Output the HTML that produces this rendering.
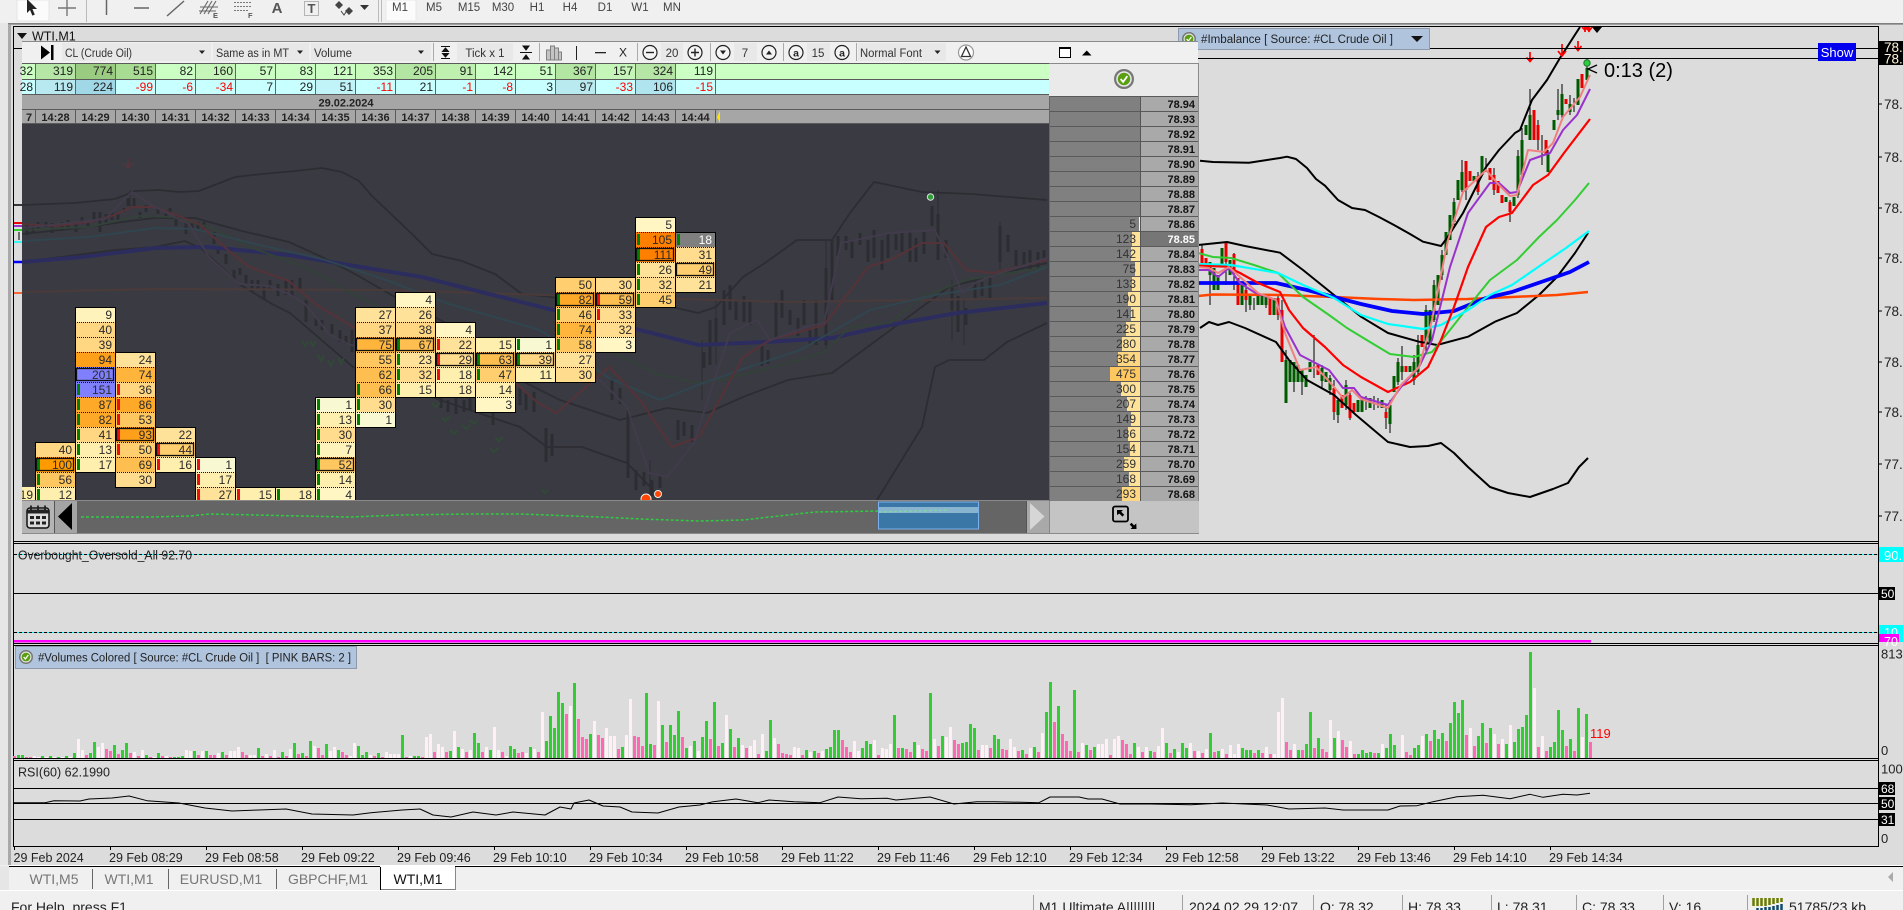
<!DOCTYPE html>
<html><head><meta charset="utf-8"><title>WTI,M1</title>
<style>
html,body{margin:0;padding:0;background:#dcdcdc;width:1903px;height:910px;overflow:hidden}
svg{display:block;font-family:"Liberation Sans",sans-serif}
.c{width:40px;height:15px}
.g,.r{x:2px;width:3px;height:11px}
.g{fill:#008000}.r{fill:#e81010}
.b{x:1.5px;width:37px;height:12px;fill:none;stroke:#111;stroke-width:1.3}
.cells text{font-size:12px;text-anchor:end;fill:#2a2a2a}
.tm{font-size:11px;font-weight:bold;text-anchor:middle;fill:#222}
.pr{font-size:11px;font-weight:bold;text-anchor:end;fill:#111}
.pv{font-size:12px;text-anchor:end;fill:#333}
.t1{font-size:12px;text-anchor:end;fill:#222}
.neg{fill:#f00}
.ax{font-size:12.5px;fill:#222}
.ay{font-size:13.5px;fill:#222}
.lb{font-size:12.5px;fill:#222}
.tf{font-size:11.5px;fill:#444;text-anchor:middle}
.tb{font-size:11.5px;fill:#333}
.tab{font-size:14px;fill:#777;text-anchor:middle}
.st{font-size:14px;fill:#222}
.k{fill:none;stroke:#000;stroke-linejoin:round}
.m{fill:none;stroke-linejoin:round}
</style></head><body>
<svg width="1903" height="910" viewBox="0 0 1903 910" xmlns="http://www.w3.org/2000/svg">
<defs>
<clipPath id="ch"><rect x="1198" y="27" width="680" height="514"/></clipPath>
<clipPath id="dk"><rect x="22" y="124" width="1027" height="376"/></clipPath>
<clipPath id="rt"><rect x="1879" y="0" width="24" height="910"/></clipPath>
<symbol id="ok" viewBox="0 0 18 18"><circle cx="9" cy="9" r="8" fill="#e8e8e8" stroke="#777" stroke-width="2"/><circle cx="9" cy="9" r="5.6" fill="#5a9e12"/><path d="M6 9l2.2 2.6L12 6.4" fill="none" stroke="#fff" stroke-width="1.6"/></symbol>
</defs>

<!-- base -->
<rect width="1903" height="910" fill="#dcdcdc"/>
<rect width="1903" height="23" fill="#f0f0f0"/>
<rect x="0" y="23" width="9" height="843" fill="#e6e6e6"/>
<rect x="8" y="23" width="3" height="843" fill="#a9a9a9"/>
<rect x="8" y="23" width="1895" height="1" fill="#808080"/>
<rect x="8" y="24" width="1895" height="1" fill="#a0a0a0"/>
<rect x="13" y="26" width="1865" height="1" fill="#000"/>
<rect x="13" y="26" width="1" height="820" fill="#000"/>
<rect x="1878" y="26" width="1" height="820" fill="#000"/>

<!-- top toolbar -->
<rect x="17" y="0" width="32" height="21" fill="#fbfbfb" stroke="#e4e4e4"/>
<path d="M27 -1V13l3-3 2.4 5.6 2.4-1L32.4 9H37z" fill="#222"/>
<path d="M67 0v16M58 8h18" stroke="#777" stroke-width="1.4" fill="none"/>
<rect x="86" y="0" width="1" height="22" fill="#bbb"/>
<path d="M106.500 0v15" stroke="#666" stroke-width="1.5"/>
<path d="M134 8h15" stroke="#666" stroke-width="1.5"/>
<path d="M167 16L184 1" stroke="#666" stroke-width="1.5"/>
<path d="M200 14L208 1M204 14L212 1M208 14L216 1M200 7H218M199 11H216" stroke="#666" stroke-width="1.1" fill="none"/>
<text x="213" y="18" font-size="7.500" font-weight="bold" fill="#555">E</text>
<path d="M234 2.500h18M234 6.500h18M234 10.500h14" stroke="#777" stroke-dasharray="2 1" fill="none"/>
<text x="248" y="18" font-size="7.500" font-weight="bold" fill="#555">F</text>
<text x="277" y="13" font-size="15" font-weight="bold" fill="#555" text-anchor="middle">A</text>
<rect x="304.500" y="1.500" width="14" height="14" fill="none" stroke="#777" stroke-dasharray="1 1"/>
<text x="311.500" y="13" font-size="13" font-weight="bold" fill="#555" text-anchor="middle">T</text>
<path d="M339 1l4 4-4 4-4-4zM349 7l4 4-4 4-4-4z" fill="#444"/><path d="M341 11l3 4 2-3" stroke="#444" fill="none"/>
<path d="M360 5h9l-4.500 5z" fill="#333"/>
<rect x="378" y="0" width="1" height="22" fill="#bbb"/><rect x="381" y="0" width="1" height="22" fill="#bbb"/>
<rect x="386" y="0" width="30" height="21" fill="#fbfbfb" stroke="#e8e8e8"/>
<g class="tfg">
<text class="tf" x="400" y="11">M1</text><text class="tf" x="434" y="11">M5</text><text class="tf" x="469" y="11">M15</text><text class="tf" x="503" y="11">M30</text><text class="tf" x="537" y="11">H1</text><text class="tf" x="570" y="11">H4</text><text class="tf" x="605" y="11">D1</text><text class="tf" x="640" y="11">W1</text><text class="tf" x="672" y="11">MN</text>
</g>

<!-- window title -->
<path d="M17 33h10l-5 6z" fill="#111"/>
<text x="32" y="40.500" font-size="12.500" fill="#111">WTI,M1</text>
<rect x="14" y="48" width="8" height="1" fill="#000"/>

<!-- right chart -->
<g clip-path="url(#ch)">
<path d="M1202 244V268M1210 262V305M1226 243V285M1234 253V290M1246 285V312M1250 296V310M1254 298V310M1266 295V308M1278 295V320M1282 300V362M1286 350V403M1294 362V392M1302 370V395M1314 335V378M1322 365V388M1330 375V395M1334 380V420M1338 398V423M1346 380V410M1350 392V420M1366 396V410M1374 396V410M1378 398V408M1386 405V429M1390 400V433M1398 358V385M1402 346V380M1414 355V385M1418 335V375M1426 305V352M1434 280V322M1442 250V280M1454 198V225M1462 160V192M1482 156V175M1486 158V172M1494 168V195M1510 200V222M1518 150V198M1522 128V178M1530 89V140M1538 120V150M1542 135V165M1548 150V172M1558 89V120M1562 84V118M1570 95V115M1574 98V112M1587 58V80M1466 161V200M1478 172V195" stroke="#000" fill="none"/>
<path stroke="#005a00" stroke-width="3" fill="none" d="M1210 262V275M1214 268V290M1218 275V290M1222 248V265M1230 260V275M1242 285V305M1250 296V305M1258 295V305M1262 296V305M1266 296V305M1274 298V315M1286 360V403M1290 360V382M1294 362V382M1298 365V382M1302 370V382M1306 375V387M1310 362V372M1322 368V381M1326 372V382M1330 378V390M1338 400V415M1346 385V405M1358 400V412M1362 400V412M1370 398V408M1382 400V408M1390 405V424M1394 376V392M1398 362V382M1402 366V372M1410 366V372M1414 362V380M1418 345V372M1426 310V345M1430 310V345M1434 285V320M1438 275V305M1442 255V275M1446 232V255M1450 215V240M1454 202V222M1458 180V200M1462 172V190M1474 176V181M1482 156V175M1506 197V202M1514 197V206M1518 156V195M1522 140V175M1526 125V135M1530 115V140M1548 153V172M1554 120V130M1558 110V115M1562 94V115M1570 104V112M1578 79V105M1587 68V80"/>
<path stroke="#e80000" stroke-width="3" fill="none" d="M1202 249V263M1206 258V266M1226 243V262M1234 254V270M1238 278V305M1246 290V300M1270 298V315M1278 298V315M1282 310V362M1318 364V375M1334 388V412M1342 395V408M1350 395V418M1354 403V412M1386 412V418M1406 366V372M1422 335V347M1466 161V190M1470 171V181M1478 176V192M1490 168V180M1494 175V190M1498 181V193M1502 195V203M1510 202V212M1534 110V140M1538 125V140M1546 140V155M1566 99V104M1582 74V88"/>
<path class="k" stroke-width="2" d="M1200 160.700L1213 162L1249 162.700L1280 158L1287 156.700L1296 159L1307 168L1316 179L1325 185.700L1338 200L1352 208L1365 210L1379 217L1394 225L1410 234L1423 241.700L1441 246L1448 236.700L1463 213L1486 167L1499 150L1515 133L1520 130L1532 100L1547 80L1560 58L1580 27"/>
<path class="k" stroke-width="2" d="M1198 245L1227 242L1245 246L1280 252.700L1303 270L1334 295L1361 316.700L1388 333L1419 341.700L1437 345L1468 336.700L1495 321.700L1517 313L1539 295L1557 277L1575 253L1588 233"/>
<path class="k" stroke-width="2" d="M1200 328L1209 322L1218 325L1229 322L1245 328L1276 342L1289 360L1307 380L1334 395L1356 415L1388 442L1410 447L1428 446L1441 443L1454 453L1468 467L1490 487L1508 493L1530 497L1553 489L1568 483L1579 467L1588 458"/>
<path class="m" stroke="#ff4500" stroke-width="2.500" d="M1198 296L1213 294.500L1280 295L1334 297L1379 299L1414 300L1468 299L1512 297L1557 295L1588 292"/>
<path class="m" stroke="#00f" stroke-width="3.800" d="M1198 283L1276 283L1307 290L1334 297L1361 304L1392 311L1423 314L1454 311L1486 298L1512 292L1544 281L1570 272L1589 262"/>
<path class="m" stroke="#32cd32" stroke-width="2" d="M1198 253L1213 257L1231 258L1254 265L1278 273L1303 297L1329 315L1347 328L1370 342L1390 354L1414 357L1432 352L1450 330L1468 307L1490 280L1517 260L1539 237L1557 220L1575 200L1589 183"/>
<path class="m" stroke="#0ff" stroke-width="2.200" d="M1198 264L1231 265L1278 273L1303 285L1334 298L1361 315L1388 324L1423 329L1441 325L1468 310L1490 295L1512 285L1544 263L1566 248L1589 231"/>
<path class="m" stroke="#f00" stroke-width="2.200" d="M1198 265.700L1227 266.700L1240 273L1258 283L1280 292L1289 310L1303 328L1325 347L1343 365L1361 377L1388 392L1410 382L1428 367L1441 340L1454 307L1468 267L1486 227L1499 217L1512 213L1533 185L1548 175L1564 153L1590 119"/>
<path class="m" stroke="#9932cc" stroke-width="2" d="M1198 270L1209 270L1218 277L1229 268L1240 283L1254 292L1276 300L1285 327L1300 355L1329 370L1343 388L1354 388L1361 397L1388 405L1401 387L1419 367L1432 340L1450 267L1468 213L1490 183L1499 183L1510 193L1517 192L1530 160L1544 155L1550 153L1563 130L1577 115L1590 89"/>
<path class="m" stroke="#f08080" stroke-width="2" d="M1198 267L1209 268L1218 273L1229 267L1240 277L1258 293L1276 300L1285 333L1300 370L1316 367L1334 387L1343 398L1352 390L1361 399L1388 408L1401 385L1419 367L1432 320L1448 240L1463 192L1486 170L1499 185L1510 196L1517 195L1528 150L1544 152L1553 143L1563 117L1580 97L1590 75"/>
<!-- arrows -->
<path d="M1530 52v9M1526.500 57.500l3.500 4 3.500-4M1562 44v11M1558 51l4 5 4-5M1578 41v9M1574.500 46l3.500 4.500 3.500-4.500" stroke="#f00" stroke-width="1.700" fill="none"/>
<path d="M1592 27h10l-5 6z" fill="#000"/>
<path d="M1582 27l3 3 3-3M1586 27l3 4 3-4M1585 27v5M1589 27v5" stroke="#f00" stroke-width="1.800" fill="none"/>
</g>
<rect x="1198" y="48" width="680" height="1" fill="#000"/>
<rect x="1198" y="58" width="680" height="1" fill="#000"/>
<circle cx="1587" cy="63" r="3.200" fill="#2ecc40" stroke="#1c7a24"/>
<path d="M1597 65l-9 4 9 4" stroke="#000" stroke-width="1.300" fill="none"/>
<text x="1604" y="77" font-size="20" fill="#000">0:13 (2)</text>
<rect x="1818" y="43" width="38" height="18" fill="#0000ee"/>
<text x="1837" y="57" font-size="13" fill="#fff" text-anchor="middle">Show</text>

<!-- imbalance label -->
<rect x="1178.500" y="28.500" width="251" height="21" fill="#b0c4de" stroke="#8f99ab"/>
<use href="#ok" x="1182" y="32" width="14" height="14"/>
<text x="1201" y="43" font-size="11.500" fill="#222" textLength="192" lengthAdjust="spacingAndGlyphs">#Imbalance [ Source: #CL Crude Oil ]</text>
<path d="M1411 36h12l-6 6z" fill="#111"/>

<!-- left stubs -->
<path d="M14 223h8" stroke="#e00" stroke-width="2"/><path d="M14 226h8" stroke="#9932cc" stroke-width="2"/><path d="M14 230h8" stroke="#32cd32" stroke-width="2"/><path d="M14 242h8" stroke="#0ff" stroke-width="1.500"/><path d="M14 262h8" stroke="#00f" stroke-width="2.500"/><path d="M14 293h8" stroke="#ff4500" stroke-width="1.500"/><path d="M14 205h8" stroke="#000" stroke-width="1.500"/>
<path d="M19 232v8" stroke="#000"/>

<!-- panel -->
<rect x="22" y="63" width="1176" height="438" fill="#a6a6a6"/>
<rect x="22" y="124" width="1027" height="376" fill="#3a3b42"/>
<g clip-path="url(#dk)">
<path fill="none" stroke="#2c2d33" stroke-width="3" d="M27 225V235M33 225V232M38 222V230M46 222V227M52 223V233M62 222V231M68 220V228M76 222V232M82 217V224M88 220V227M94 212V222M100 212V232M106 214V224M112 212V220M118 212V222M124 208V212M128 198V206M134 198V206M140 212V218M146 205V212M158 209V214M166 210V218M170 208V214M176 216V226M186 222V234M192 223V228M198 222V230M204 222V230M214 232V244M218 249V254M226 254V264M234 270V280M240 268V275M246 275V285M252 280V292M258 280V290M264 285V300M270 280V290M278 284V296M286 280V295M292 280V296M300 278V290M306 300V322M316 318V326M322 320V330M332 324V334M340 330V342M346 336V344M352 330V352M360 340V350M441 397V408M448 400V412M456 398V414M464 400V412M470 398V410M493 412V425M520 388V405M526 392V410M534 392V412M546 428V462M552 434V456M612 378V400M620 388V404M628 410V478M636 470V490M644 472V486M652 480V496M660 475V488M678 420V440M684 422V436M692 425V442M704 352V368M710 320V365M716 318V342M724 290V325M730 285V310M736 300V320M744 296V322M750 300V325M762 345V366M768 350V364M776 302V340M782 290V318M790 310V325M798 318V336M804 300V325M810 330V344M816 300V345M826 268V345M832 240V300M838 236V256M846 236V250M852 240V258M860 233V245M868 240V262M874 230V258M882 240V270M888 233V258M896 234V250M902 232V252M910 232V262M916 238V262M924 232V254M932 206V226M938 214V260M946 240V258M952 288V310M958 296V332M966 308V325M975 280V298M982 282V296M990 278V298M1000 226V262M1008 235V252M1016 250V266M1024 252V266M1030 250V270M1038 252V268M1044 250V262"/>
<path fill="none" stroke="#2c2d33" d="M130 190V206M650 460V500M716 300V365M938 190V260M702 340V400M826 240V350M1000 222V270M952 280V340M964 300V345"/>
<path class="m" stroke="#2c2d32" stroke-width="1.800" d="M22 205L75 203L115 199L135 191L159 190L179 192L199 191L235 177L262 174L295 171L322 168L342 172L359 181L372 196L412 234L432 254L462 261L495 274L522 294L600 302L672 307L698 313L716 307L743 277L765 263L797 240L832 240L850 213L874 182L922 192L971 194L1047 200"/>
<path class="m" stroke="#2c2d32" stroke-width="1.800" d="M22 234L89 227L122 222L155 218L195 218L242 231L289 242L322 257L355 274L395 297L460 330L520 380L560 400L620 420L667 408L707 413L743 397L788 380L832 373L877 340L949 287L1002 273L1047 263"/>
<path class="m" stroke="#2c2d32" stroke-width="1.800" d="M22 262L115 250L155 247L185 241L202 249L239 284L272 304L290 313L353 367L440 400L520 427L547 447L582 447L627 463L658 495M877 500L922 427L935 367L949 360L984 360L1007 342L1047 323"/>
<path class="m" stroke="#4a3a3a" stroke-width="2" d="M22 292L155 289L389 290L542 295L790 302L1047 298"/>
<path class="m" stroke="#2c2d5e" stroke-width="4" d="M22 262L82 257L155 248L209 247L289 255L355 266L422 277L489 294L565 313L632 328L699 345L765 342L832 338L890 325L957 313L1047 303"/>
<path class="m" stroke="#334238" stroke-width="1.800" d="M22 230L89 227L139 216L172 217L209 227L255 249L305 267L372 304L450 340L540 360L609 350L654 373L698 383L721 380L761 370L788 363L824 352L850 327L890 323L922 297L966 280L1047 267"/>
<path class="m" stroke="#2f4650" stroke-width="1.800" d="M22 241L89 237L155 228L195 229L255 244L322 259L389 281L449 304L540 330L609 378L660 400L698 385L740 370L800 350L870 310L935 295L1000 285L1047 267"/>
<path class="m" stroke="#553238" stroke-width="2" d="M22 224L55 226L89 222L112 216L132 207L155 207L199 224L229 251L249 267L289 281L315 304L355 328L400 345L440 355L470 340L520 387L538 403L556 413L609 367L640 400L672 447L699 437L721 397L743 357L770 340L824 325L868 267L890 260L922 243L944 243L966 270L993 273L1047 260"/>
<path class="m" stroke="#423b4c" stroke-width="1.800" d="M22 228L105 219L132 192L155 207L189 224L209 257L239 284L269 286L289 294L305 304L330 335L350 345L600 380L627 407L649 473L667 477L694 443L712 387L730 333L757 320L770 340L806 327L824 323L841 243L890 233L935 230L949 260L962 293L975 283L989 277L1047 258"/>
<!-- dim arrows -->
<path d="M128 158v10M123 163l5 5 5-5" stroke="#55343a" stroke-width="1.500" fill="none"/>
<path d="M302 341l3 5 3-5M310 341l3 5 3-5M318 355l3 6 3-6M328 360l3 6 3-6M338 358l3 6 3-6" stroke="#2f4a35" stroke-width="1.500" fill="none"/>
<path d="M432 403l4 4 4-4M441 417l4 4 4-4M450 430l4 4 4-4M462 425l4 4 4-4M470 420l4 4 4-4M495 437l4 4 4-4M490 448l4 4 4-4M542 490l3 3 3-3" stroke="#2f4a35" stroke-width="1.800" fill="none"/>
<circle cx="930.500" cy="197" r="3.200" fill="#2e9e3a" stroke="#ddd"/>

<!-- footprint cells -->
<g class="cells">
<g><rect x="22" y="487" width="13" height="15" fill="#ffefae"/><text x="33" y="499">19</text></g>

<g transform="translate(35,0)">
<rect class="c" y="442" fill="#ffd682"/><text x="37" y="454">40</text>
<rect class="c" y="457" fill="#ff9a00"/><rect class="g" y="459"/><rect class="b" y="458.500"/><text x="37" y="469">100</text>
<rect class="c" y="472" fill="#ffc760"/><rect class="g" y="474"/><text x="37" y="484">56</text>
<rect class="c" y="487" fill="#ffefae"/><rect class="g" y="489"/><text x="37" y="499">12</text>
<path d="M0 457.500h40M0 472.500h40M0 487.500h40" stroke="#111" stroke-dasharray="1 1"/><rect x=".5" y="442.500" width="40" height="60" fill="none" stroke="#000"/>
</g>

<g transform="translate(75,0)">
<rect class="c" y="307" fill="#fff3bc"/><text x="37" y="319">9</text>
<rect class="c" y="322" fill="#ffd682"/><text x="37" y="334">40</text>
<rect class="c" y="337" fill="#ffd682"/><text x="37" y="349">39</text>
<rect class="c" y="352" fill="#ffa01a"/><text x="37" y="364">94</text>
<rect class="c" y="367" fill="#8080ff"/><rect class="b" y="368.500"/><text x="37" y="379">201</text>
<rect class="c" y="382" fill="#8080ff"/><rect class="g" y="384"/><text x="37" y="394">151</text>
<rect class="c" y="397" fill="#ffa928"/><rect class="g" y="399"/><text x="37" y="409">87</text>
<rect class="c" y="412" fill="#ffa928"/><rect class="g" y="414"/><text x="37" y="424">82</text>
<rect class="c" y="427" fill="#ffd682"/><rect class="g" y="429"/><text x="37" y="439">41</text>
<rect class="c" y="442" fill="#ffefae"/><rect class="g" y="444"/><text x="37" y="454">13</text>
<rect class="c" y="457" fill="#ffefae"/><rect class="g" y="459"/><text x="37" y="469">17</text>
<path d="M0 322.500h40M0 337.500h40M0 352.500h40M0 367.500h40M0 382.500h40M0 397.500h40M0 412.500h40M0 427.500h40M0 442.500h40M0 457.500h40" stroke="#111" stroke-dasharray="1 1"/><rect x=".5" y="307.500" width="40" height="165" fill="none" stroke="#000"/>
</g>

<g transform="translate(115,0)">
<rect class="c" y="352" fill="#ffe29a"/><text x="37" y="364">24</text>
<rect class="c" y="367" fill="#ffb43c"/><text x="37" y="379">74</text>
<rect class="c" y="382" fill="#ffd682"/><rect class="r" y="384"/><text x="37" y="394">36</text>
<rect class="c" y="397" fill="#ffa928"/><rect class="r" y="399"/><text x="37" y="409">86</text>
<rect class="c" y="412" fill="#ffc760"/><rect class="r" y="414"/><text x="37" y="424">53</text>
<rect class="c" y="427" fill="#ffa01a"/><rect class="r" y="429"/><rect class="b" y="428.500"/><text x="37" y="439">93</text>
<rect class="c" y="442" fill="#ffce6e"/><rect class="r" y="444"/><text x="37" y="454">50</text>
<rect class="c" y="457" fill="#ffbf50"/><text x="37" y="469">69</text>
<rect class="c" y="472" fill="#ffdc8e"/><text x="37" y="484">30</text>
<path d="M0 367.500h40M0 382.500h40M0 397.500h40M0 412.500h40M0 427.500h40M0 442.500h40M0 457.500h40M0 472.500h40" stroke="#111" stroke-dasharray="1 1"/><rect x=".5" y="352.500" width="40" height="135" fill="none" stroke="#000"/>
</g>

<g transform="translate(155,0)">
<rect class="c" y="427" fill="#ffe29a"/><text x="37" y="439">22</text>
<rect class="c" y="442" fill="#ffce6e"/><rect class="r" y="444"/><rect class="b" y="443.500"/><text x="37" y="454">44</text>
<rect class="c" y="457" fill="#ffefae"/><rect class="r" y="459"/><text x="37" y="469">16</text>
<path d="M0 442.500h40M0 457.500h40" stroke="#111" stroke-dasharray="1 1"/><rect x=".5" y="427.500" width="40" height="45" fill="none" stroke="#000"/>
</g>

<g transform="translate(195,0)">
<rect class="c" y="457" fill="#f8f8d2"/><rect class="r" y="459"/><text x="37" y="469">1</text>
<rect class="c" y="472" fill="#ffefae"/><rect class="r" y="474"/><text x="37" y="484">17</text>
<rect class="c" y="487" fill="#ffe29a"/><rect class="r" y="489"/><text x="37" y="499">27</text>
<path d="M0 472.500h40M0 487.500h40" stroke="#111" stroke-dasharray="1 1"/><rect x=".5" y="457.500" width="40" height="45" fill="none" stroke="#000"/>
</g>

<g transform="translate(235,0)"><rect class="c" y="487" fill="#ffefae"/><rect class="r" y="489"/><text x="37" y="499">15</text><rect x=".5" y="487.500" width="40" height="15" fill="none" stroke="#000"/></g>
<g transform="translate(275,0)"><rect class="c" y="487" fill="#ffefae"/><rect class="g" y="489"/><text x="37" y="499">18</text><rect x=".5" y="487.500" width="40" height="15" fill="none" stroke="#000"/></g>

<g transform="translate(315,0)">
<rect class="c" y="397" fill="#f8f8d2"/><rect class="g" y="399"/><text x="37" y="409">1</text>
<rect class="c" y="412" fill="#ffefae"/><rect class="g" y="414"/><text x="37" y="424">13</text>
<rect class="c" y="427" fill="#ffdc8e"/><rect class="g" y="429"/><text x="37" y="439">30</text>
<rect class="c" y="442" fill="#fff3bc"/><rect class="g" y="444"/><text x="37" y="454">7</text>
<rect class="c" y="457" fill="#ffc760"/><rect class="g" y="459"/><rect class="b" y="458.500"/><text x="37" y="469">52</text>
<rect class="c" y="472" fill="#ffefae"/><rect class="g" y="474"/><text x="37" y="484">14</text>
<rect class="c" y="487" fill="#fff6c4"/><rect class="g" y="489"/><text x="37" y="499">4</text>
<path d="M0 412.500h40M0 427.500h40M0 442.500h40M0 457.500h40M0 472.500h40M0 487.500h40" stroke="#111" stroke-dasharray="1 1"/><rect x=".5" y="397.500" width="40" height="105" fill="none" stroke="#000"/>
</g>

<g transform="translate(355,0)">
<rect class="c" y="307" fill="#ffe29a"/><text x="37" y="319">27</text>
<rect class="c" y="322" fill="#ffd682"/><text x="37" y="334">37</text>
<rect class="c" y="337" fill="#ffb43c"/><rect class="b" y="338.500"/><text x="37" y="349">75</text>
<rect class="c" y="352" fill="#ffc760"/><text x="37" y="364">55</text>
<rect class="c" y="367" fill="#ffbf50"/><text x="37" y="379">62</text>
<rect class="c" y="382" fill="#ffbf50"/><rect class="g" y="384"/><text x="37" y="394">66</text>
<rect class="c" y="397" fill="#ffdc8e"/><rect class="g" y="399"/><text x="37" y="409">30</text>
<rect class="c" y="412" fill="#f8f8d2"/><rect class="g" y="414"/><text x="37" y="424">1</text>
<path d="M0 322.500h40M0 337.500h40M0 352.500h40M0 367.500h40M0 382.500h40M0 397.500h40M0 412.500h40" stroke="#111" stroke-dasharray="1 1"/><rect x=".5" y="307.500" width="40" height="120" fill="none" stroke="#000"/>
</g>

<g transform="translate(395,0)">
<rect class="c" y="292" fill="#fff6c4"/><text x="37" y="304">4</text>
<rect class="c" y="307" fill="#ffe29a"/><text x="37" y="319">26</text>
<rect class="c" y="322" fill="#ffd682"/><text x="37" y="334">38</text>
<rect class="c" y="337" fill="#ffbf50"/><rect class="g" y="339"/><rect class="b" y="338.500"/><text x="37" y="349">67</text>
<rect class="c" y="352" fill="#ffe29a"/><rect class="g" y="354"/><text x="37" y="364">23</text>
<rect class="c" y="367" fill="#ffdc8e"/><rect class="g" y="369"/><text x="37" y="379">32</text>
<rect class="c" y="382" fill="#ffefae"/><rect class="g" y="384"/><text x="37" y="394">15</text>
<path d="M0 307.500h40M0 322.500h40M0 337.500h40M0 352.500h40M0 367.500h40M0 382.500h40" stroke="#111" stroke-dasharray="1 1"/><rect x=".5" y="292.500" width="40" height="105" fill="none" stroke="#000"/>
</g>

<g transform="translate(435,0)">
<rect class="c" y="322" fill="#fff6c4"/><text x="37" y="334">4</text>
<rect class="c" y="337" fill="#ffe29a"/><rect class="r" y="339"/><text x="37" y="349">22</text>
<rect class="c" y="352" fill="#ffdc8e"/><rect class="r" y="354"/><rect class="b" y="353.500"/><text x="37" y="364">29</text>
<rect class="c" y="367" fill="#ffefae"/><rect class="r" y="369"/><text x="37" y="379">18</text>
<rect class="c" y="382" fill="#ffefae"/><text x="37" y="394">18</text>
<path d="M0 337.500h40M0 352.500h40M0 367.500h40M0 382.500h40" stroke="#111" stroke-dasharray="1 1"/><rect x=".5" y="322.500" width="40" height="75" fill="none" stroke="#000"/>
</g>

<g transform="translate(475,0)">
<rect class="c" y="337" fill="#ffefae"/><text x="37" y="349">15</text>
<rect class="c" y="352" fill="#ffbf50"/><rect class="g" y="354"/><rect class="b" y="353.500"/><text x="37" y="364">63</text>
<rect class="c" y="367" fill="#ffce6e"/><rect class="g" y="369"/><text x="37" y="379">47</text>
<rect class="c" y="382" fill="#ffefae"/><text x="37" y="394">14</text>
<rect class="c" y="397" fill="#fff6c4"/><text x="37" y="409">3</text>
<path d="M0 352.500h40M0 367.500h40M0 382.500h40M0 397.500h40" stroke="#111" stroke-dasharray="1 1"/><rect x=".5" y="337.500" width="40" height="75" fill="none" stroke="#000"/>
</g>

<g transform="translate(515,0)">
<rect class="c" y="337" fill="#f8f8d2"/><rect class="g" y="339"/><text x="37" y="349">1</text>
<rect class="c" y="352" fill="#ffd682"/><rect class="g" y="354"/><rect class="b" y="353.500"/><text x="37" y="364">39</text>
<rect class="c" y="367" fill="#ffefae"/><text x="37" y="379">11</text>
<path d="M0 352.500h40M0 367.500h40" stroke="#111" stroke-dasharray="1 1"/><rect x=".5" y="337.500" width="40" height="45" fill="none" stroke="#000"/>
</g>

<g transform="translate(555,0)">
<rect class="c" y="277" fill="#ffce6e"/><text x="37" y="289">50</text>
<rect class="c" y="292" fill="#ffa928"/><rect class="g" y="294"/><rect class="b" y="293.500"/><text x="37" y="304">82</text>
<rect class="c" y="307" fill="#ffce6e"/><rect class="g" y="309"/><text x="37" y="319">46</text>
<rect class="c" y="322" fill="#ffb43c"/><rect class="g" y="324"/><text x="37" y="334">74</text>
<rect class="c" y="337" fill="#ffc760"/><rect class="g" y="339"/><text x="37" y="349">58</text>
<rect class="c" y="352" fill="#ffe29a"/><text x="37" y="364">27</text>
<rect class="c" y="367" fill="#ffdc8e"/><text x="37" y="379">30</text>
<path d="M0 292.500h40M0 307.500h40M0 322.500h40M0 337.500h40M0 352.500h40M0 367.500h40" stroke="#111" stroke-dasharray="1 1"/><rect x=".5" y="277.500" width="40" height="105" fill="none" stroke="#000"/>
</g>

<g transform="translate(595,0)">
<rect class="c" y="277" fill="#ffdc8e"/><text x="37" y="289">30</text>
<rect class="c" y="292" fill="#ffbf50"/><rect class="r" y="294"/><rect class="b" y="293.500"/><text x="37" y="304">59</text>
<rect class="c" y="307" fill="#ffdc8e"/><rect class="r" y="309"/><text x="37" y="319">33</text>
<rect class="c" y="322" fill="#ffdc8e"/><text x="37" y="334">32</text>
<rect class="c" y="337" fill="#fff6c4"/><text x="37" y="349">3</text>
<path d="M0 292.500h40M0 307.500h40M0 322.500h40M0 337.500h40" stroke="#111" stroke-dasharray="1 1"/><rect x=".5" y="277.500" width="40" height="75" fill="none" stroke="#000"/>
</g>

<g transform="translate(635,0)">
<rect class="c" y="217" fill="#fff6c4"/><text x="37" y="229">5</text>
<rect class="c" y="232" fill="#ff8000"/><rect class="g" y="234"/><text x="37" y="244">105</text>
<rect class="c" y="247" fill="#ff8000"/><rect class="g" y="249"/><rect class="b" y="248.500"/><text x="37" y="259">111</text>
<rect class="c" y="262" fill="#ffe29a"/><rect class="g" y="264"/><text x="37" y="274">26</text>
<rect class="c" y="277" fill="#ffdc8e"/><rect class="g" y="279"/><text x="37" y="289">32</text>
<rect class="c" y="292" fill="#ffce6e"/><rect class="g" y="294"/><text x="37" y="304">45</text>
<path d="M0 232.500h40M0 247.500h40M0 262.500h40M0 277.500h40M0 292.500h40" stroke="#111" stroke-dasharray="1 1"/><rect x=".5" y="217.500" width="40" height="90" fill="none" stroke="#000"/>
</g>

<g transform="translate(675,0)">
<rect class="c" y="232" fill="#7f7f7f"/><rect class="g" y="234"/><text x="37" y="244" style="fill:#fff">18</text>
<rect class="c" y="247" fill="#ffdc8e"/><text x="37" y="259">31</text>
<rect class="c" y="262" fill="#ffce6e"/><rect class="b" y="263.500"/><text x="37" y="274">49</text>
<rect class="c" y="277" fill="#ffe29a"/><text x="37" y="289">21</text>
<path d="M0 247.500h40M0 262.500h40M0 277.500h40" stroke="#111" stroke-dasharray="1 1"/><rect x=".5" y="232.500" width="40" height="60" fill="none" stroke="#000"/>
</g>
</g>
<circle cx="646" cy="499" r="5" fill="#ff4500" stroke="#eee"/>
<circle cx="658" cy="494" r="3.500" fill="#ff4500" stroke="#eee"/>
</g>

<!-- rows 1/2 -->
<rect x="22" y="63" width="1027" height="16" fill="#ccffc4"/>
<rect x="22" y="79" width="1027" height="15" fill="#c8ffff"/>
<rect x="35" y="63" width="40" height="16" fill="#b5e6a5"/><rect x="75" y="63" width="40" height="16" fill="#99cc80"/><rect x="115" y="63" width="40" height="16" fill="#a8dc92"/><rect x="195" y="63" width="40" height="16" fill="#c5f5b8"/><rect x="355" y="63" width="40" height="16" fill="#c8fabc"/><rect x="395" y="63" width="40" height="16" fill="#b3e5a3"/><rect x="435" y="63" width="40" height="16" fill="#c0f0b0"/><rect x="555" y="63" width="40" height="16" fill="#b3e5a3"/><rect x="595" y="63" width="40" height="16" fill="#c5f5b8"/><rect x="635" y="63" width="40" height="16" fill="#b5e6a5"/>
<rect x="35" y="79" width="40" height="15" fill="#b8e8f0"/><rect x="75" y="79" width="40" height="15" fill="#a0d8e8"/><rect x="315" y="79" width="40" height="15" fill="#c0f4f8"/><rect x="555" y="79" width="40" height="15" fill="#b8eaf0"/><rect x="635" y="79" width="40" height="15" fill="#b0e4ee"/>
<path d="M35.500 63v31M75.500 63v31M115.500 63v31M155.500 63v31M195.500 63v31M235.500 63v31M275.500 63v31M315.500 63v31M355.500 63v31M395.500 63v31M435.500 63v31M475.500 63v31M515.500 63v31M555.500 63v31M595.500 63v31M635.500 63v31M675.500 63v31M715.500 63v31" stroke="#5c6a5c" fill="none"/>
<path d="M22 63.500h1027M22 79.500h1027M22 94.500h1027M22 109.500h1027M22 123.500h1027" stroke="#5a5a5a" fill="none"/>
<text class="t1" x="33" y="75">32</text><text class="t1" x="73" y="75">319</text><text class="t1" x="113" y="75">774</text><text class="t1" x="153" y="75">515</text><text class="t1" x="193" y="75">82</text><text class="t1" x="233" y="75">160</text><text class="t1" x="273" y="75">57</text><text class="t1" x="313" y="75">83</text><text class="t1" x="353" y="75">121</text><text class="t1" x="393" y="75">353</text><text class="t1" x="433" y="75">205</text><text class="t1" x="473" y="75">91</text><text class="t1" x="513" y="75">142</text><text class="t1" x="553" y="75">51</text><text class="t1" x="593" y="75">367</text><text class="t1" x="633" y="75">157</text><text class="t1" x="673" y="75">324</text><text class="t1" x="713" y="75">119</text>
<text class="t1" x="33" y="91">28</text><text class="t1" x="73" y="91">119</text><text class="t1" x="113" y="91">224</text><text class="t1 neg" x="153" y="91">-99</text><text class="t1 neg" x="193" y="91">-6</text><text class="t1 neg" x="233" y="91">-34</text><text class="t1" x="273" y="91">7</text><text class="t1" x="313" y="91">29</text><text class="t1" x="353" y="91">51</text><text class="t1 neg" x="393" y="91">-11</text><text class="t1" x="433" y="91">21</text><text class="t1 neg" x="473" y="91">-1</text><text class="t1 neg" x="513" y="91">-8</text><text class="t1" x="553" y="91">3</text><text class="t1" x="593" y="91">97</text><text class="t1 neg" x="633" y="91">-33</text><text class="t1" x="673" y="91">106</text><text class="t1 neg" x="713" y="91">-15</text>
<text class="tm" x="346" y="106.500">29.02.2024</text>
<path d="M35.500 109v15M75.500 109v15M115.500 109v15M155.500 109v15M195.500 109v15M235.500 109v15M275.500 109v15M315.500 109v15M355.500 109v15M395.500 109v15M435.500 109v15M475.500 109v15M515.500 109v15M555.500 109v15M595.500 109v15M635.500 109v15M675.500 109v15M715.500 109v15" stroke="#5a5a5a" fill="none"/>
<text class="tm" x="29" y="121">7</text><text class="tm" x="55.500" y="121">14:28</text><text class="tm" x="95.500" y="121">14:29</text><text class="tm" x="135.500" y="121">14:30</text><text class="tm" x="175.500" y="121">14:31</text><text class="tm" x="215.500" y="121">14:32</text><text class="tm" x="255.500" y="121">14:33</text><text class="tm" x="295.500" y="121">14:34</text><text class="tm" x="335.500" y="121">14:35</text><text class="tm" x="375.500" y="121">14:36</text><text class="tm" x="415.500" y="121">14:37</text><text class="tm" x="455.500" y="121">14:38</text><text class="tm" x="495.500" y="121">14:39</text><text class="tm" x="535.500" y="121">14:40</text><text class="tm" x="575.500" y="121">14:41</text><text class="tm" x="615.500" y="121">14:42</text><text class="tm" x="655.500" y="121">14:43</text><text class="tm" x="695.500" y="121">14:44</text>
<path d="M720 111l-3 6 3 6z" fill="#ffe600"/>

<!-- panel toolbar -->
<rect x="22" y="41" width="1176" height="22" fill="#f0f0f0"/>
<rect x="22" y="41" width="1176" height="1" fill="#8a8a8a"/>
<path d="M41 45.500v14l9-7z" fill="#000"/><rect x="51" y="45" width="2.500" height="15" fill="#000"/>
<rect x="62" y="43" width="149" height="18" fill="#e8e8e8"/><text class="tb" x="65" y="57" textLength="67" lengthAdjust="spacingAndGlyphs">CL (Crude Oil)</text><path d="M199 50.500h6l-3 3.500z" fill="#222"/>
<rect x="213" y="43" width="96" height="18" fill="#e8e8e8"/><text class="tb" x="216" y="57" textLength="73" lengthAdjust="spacingAndGlyphs">Same as in MT</text><path d="M297 50.500h6l-3 3.500z" fill="#222"/>
<rect x="311" y="43" width="120" height="18" fill="#e8e8e8"/><text class="tb" x="314" y="57" textLength="38" lengthAdjust="spacingAndGlyphs">Volume</text><path d="M418 50.500h6l-3 3.500z" fill="#222"/>
<rect x="433" y="43" width="1" height="18" fill="#aaa"/>
<path d="M441 46.500h9M441 58.500h9M445.500 48l-3 3.500h6zM445.500 57l-3-3.500h6z" stroke="#111" fill="#111" stroke-width="1"/>
<rect x="457" y="43" width="56" height="18" fill="#e8e8e8"/><text class="tb" x="485" y="57" text-anchor="middle">Tick x 1</text>
<path d="M520 52.500h12M526 50l-3-4h6zM526 55l-3 4h6z" stroke="#111" fill="#111" stroke-width="1"/>
<rect x="539" y="43" width="1" height="18" fill="#aaa"/>
<path d="M546.500 60V50h4v10M550.500 60V46h4v14M554.500 60V48h4v12M558.500 60V52h3v8" fill="#c4c4c4" stroke="#808080"/><rect x="546" y="59.500" width="16" height="1" fill="#808080"/>
<rect x="576" y="46" width="1" height="14" fill="#222"/>
<rect x="595" y="52" width="11" height="1.300" fill="#222"/>
<text x="623" y="56.500" font-size="12" text-anchor="middle" fill="#222">X</text>
<rect x="637" y="43" width="1" height="18" fill="#aaa"/>
<circle cx="650" cy="52.500" r="7" fill="#f4f4f4" stroke="#222" stroke-width="1.200"/><path d="M646 52.500h8" stroke="#222" stroke-width="1.400"/>
<rect x="661" y="43" width="22" height="18" fill="#e8e8e8"/><text class="tb" x="672" y="57" text-anchor="middle">20</text>
<circle cx="695" cy="52.500" r="7" fill="#f4f4f4" stroke="#222" stroke-width="1.200"/><path d="M691 52.500h8M695 48.500v8" stroke="#222" stroke-width="1.400"/>
<rect x="710" y="43" width="1" height="18" fill="#aaa"/>
<circle cx="723" cy="52.500" r="7" fill="#f4f4f4" stroke="#222" stroke-width="1.200"/><path d="M720 50.500h6l-3 4z" fill="#222"/>
<rect x="734" y="43" width="23" height="18" fill="#e8e8e8"/><text class="tb" x="745" y="57" text-anchor="middle">7</text>
<circle cx="769" cy="52.500" r="7" fill="#f4f4f4" stroke="#222" stroke-width="1.200"/><path d="M766 54.500h6l-3-4z" fill="#222"/>
<rect x="783" y="43" width="1" height="18" fill="#aaa"/>
<circle cx="796" cy="52.500" r="7" fill="#f4f4f4" stroke="#222" stroke-width="1.200"/><text x="796" y="56.500" font-size="10.500" font-weight="bold" text-anchor="middle" fill="#222">a</text>
<rect x="807" y="43" width="23" height="18" fill="#e8e8e8"/><text class="tb" x="818" y="57" text-anchor="middle">15</text>
<circle cx="842" cy="52.500" r="7" fill="#f4f4f4" stroke="#222" stroke-width="1.200"/><text x="842" y="56.500" font-size="10.500" font-weight="bold" text-anchor="middle" fill="#222">a</text>
<rect x="856" y="43" width="1" height="18" fill="#aaa"/>
<rect x="858" y="43" width="88" height="18" fill="#e8e8e8"/><text class="tb" x="860" y="57" textLength="62" lengthAdjust="spacingAndGlyphs">Normal Font</text><path d="M934.500 50.500h6l-3 3.500z" fill="#222"/>
<circle cx="966" cy="52.500" r="7.500" fill="#fff" stroke="#999" stroke-width="1.200"/><path d="M966 47l-4.500 9.500h9z" fill="none" stroke="#333" stroke-width="1.300"/>
<rect x="1059.500" y="47.500" width="11" height="10" fill="#fff" stroke="#000"/><rect x="1059" y="47" width="12" height="2" fill="#000"/>
<path d="M1082 55.500h9.500l-4.750-5z" fill="#000"/>

<!-- profile + price -->
<rect x="1049" y="63" width="149" height="33" fill="#eaeaea"/>
<rect x="1049" y="63" width="149" height="1" fill="#8a8a8a"/>
<use href="#ok" x="1114" y="69" width="20" height="20"/>
<rect x="1049" y="96" width="91" height="405" fill="#808080"/>
<rect x="1141" y="96" width="57" height="405" fill="#a9a9a9"/>
<rect x="1141" y="231" width="57" height="15" fill="#767676"/>
<g fill="#ffe29a">
<rect x="1139" y="216" width="1" height="15" fill="#fff6c4"/><rect x="1132" y="231" width="8" height="15"/><rect x="1131" y="246" width="9" height="15"/><rect x="1135" y="261" width="5" height="15"/><rect x="1132" y="276" width="8" height="15"/><rect x="1128" y="291" width="12" height="15"/><rect x="1131" y="306" width="9" height="15"/><rect x="1126" y="321" width="14" height="15"/><rect x="1122" y="336" width="18" height="15"/><rect x="1118" y="351" width="22" height="15" fill="#ffd682"/><rect x="1110" y="366" width="30" height="15" fill="#ffc760"/><rect x="1121" y="381" width="19" height="15"/><rect x="1127" y="396" width="13" height="15"/><rect x="1131" y="411" width="9" height="15"/><rect x="1128" y="426" width="12" height="15"/><rect x="1130" y="441" width="10" height="15"/><rect x="1124" y="456" width="16" height="15"/><rect x="1129" y="471" width="11" height="15"/><rect x="1122" y="486" width="18" height="15" fill="#ffd682"/>
</g>
<path d="M1049 96h149M1049 111h149M1049 126h149M1049 141h149M1049 156h149M1049 171h149M1049 186h149M1049 201h149M1049 216h149M1049 231h149M1049 246h149M1049 261h149M1049 276h149M1049 291h149M1049 306h149M1049 321h149M1049 336h149M1049 351h149M1049 366h149M1049 381h149M1049 396h149M1049 411h149M1049 426h149M1049 441h149M1049 456h149M1049 471h149M1049 486h149" stroke="#5a5a5a" stroke-width="1" transform="translate(0,.5)"/>
<rect x="1140" y="96" width="1" height="405" fill="#555"/>
<rect x="1049" y="96" width="1" height="405" fill="#666"/>
<text class="pr" x="1195" y="108">78.94</text><text class="pr" x="1195" y="123">78.93</text><text class="pr" x="1195" y="138">78.92</text><text class="pr" x="1195" y="153">78.91</text><text class="pr" x="1195" y="168">78.90</text><text class="pr" x="1195" y="183">78.89</text><text class="pr" x="1195" y="198">78.88</text><text class="pr" x="1195" y="213">78.87</text><text class="pr" x="1195" y="228">78.86</text><text class="pr" x="1195" y="243" style="fill:#fff">78.85</text><text class="pr" x="1195" y="258">78.84</text><text class="pr" x="1195" y="273">78.83</text><text class="pr" x="1195" y="288">78.82</text><text class="pr" x="1195" y="303">78.81</text><text class="pr" x="1195" y="318">78.80</text><text class="pr" x="1195" y="333">78.79</text><text class="pr" x="1195" y="348">78.78</text><text class="pr" x="1195" y="363">78.77</text><text class="pr" x="1195" y="378">78.76</text><text class="pr" x="1195" y="393">78.75</text><text class="pr" x="1195" y="408">78.74</text><text class="pr" x="1195" y="423">78.73</text><text class="pr" x="1195" y="438">78.72</text><text class="pr" x="1195" y="453">78.71</text><text class="pr" x="1195" y="468">78.70</text><text class="pr" x="1195" y="483">78.69</text><text class="pr" x="1195" y="498">78.68</text>
<text class="pv" x="1136" y="228">5</text><text class="pv" x="1136" y="243">123</text><text class="pv" x="1136" y="258">142</text><text class="pv" x="1136" y="273">75</text><text class="pv" x="1136" y="288">133</text><text class="pv" x="1136" y="303">190</text><text class="pv" x="1136" y="318">141</text><text class="pv" x="1136" y="333">225</text><text class="pv" x="1136" y="348">280</text><text class="pv" x="1136" y="363">354</text><text class="pv" x="1136" y="378">475</text><text class="pv" x="1136" y="393">300</text><text class="pv" x="1136" y="408">207</text><text class="pv" x="1136" y="423">149</text><text class="pv" x="1136" y="438">186</text><text class="pv" x="1136" y="453">154</text><text class="pv" x="1136" y="468">259</text><text class="pv" x="1136" y="483">168</text><text class="pv" x="1136" y="498">293</text>
<rect x="1198" y="63" width="1" height="471" fill="#8a8a8a"/>

<!-- scroll strip -->
<rect x="22" y="500" width="1027" height="33" fill="#656565"/>
<rect x="22" y="500" width="1027" height="1" fill="#8a8a8a"/>
<rect x="22" y="501" width="32" height="32" fill="#b4b4b4"/>
<rect x="54" y="501" width="1" height="32" fill="#555"/>
<rect x="55" y="501" width="22" height="32" fill="#a4a4a4"/>
<rect x="27" y="508" width="22" height="20" rx="3" fill="#dcdcdc" stroke="#111" stroke-width="1.500"/>
<path d="M27 512.500a3 3 0 0 1 3-3h16a3 3 0 0 1 3 3v1H27z" fill="#222"/>
<path d="M31 505.500v4M38 505.500v4M45 505.500v4" stroke="#222" stroke-width="1.800"/>
<path d="M30 516h4v3h-4zM36 516h4v3h-4zM42 516h4v3h-4zM30 521.500h4v3h-4zM36 521.500h4v3h-4zM42 521.500h4v3h-4z" fill="#222"/>
<path d="M72 503v27l-14-13.500z" fill="#000"/>
<path d="M81 517L150 517L190 516L210 514L300 516L350 517L400 515L470 514L520 514L600 517L640 519L700 521L743 520L815 512L948 510" fill="none" stroke="#2ecc40" stroke-width="1.500" stroke-dasharray="3 2"/>
<rect x="878.500" y="502" width="100" height="27" fill="#3a76a6" stroke="#7ab0ee"/>
<rect x="879" y="507" width="99" height="6" fill="#89b4d0"/>
<path d="M879 512L948 510" fill="none" stroke="#7fd8a0" stroke-width="1.300" stroke-dasharray="3 2"/>
<rect x="1027" y="501" width="22" height="32" fill="#a9a9a9"/><rect x="1026" y="501" width="1" height="32" fill="#555"/>
<path d="M1030 503v27l14.500-13.500z" fill="#d6d6d6"/>
<rect x="1049" y="501" width="150" height="32" fill="#c4c4c4"/>
<rect x="1049" y="501" width="1" height="32" fill="#888"/>
<rect x="1113" y="506.500" width="15" height="15" rx="2" fill="none" stroke="#000" stroke-width="1.800"/>
<path d="M1117 510h6l-1.800 1.800 3 3-1.800 1.800-3-3L1117 515z" fill="#000"/>
<path d="M1136.500 529h-6l1.800-1.800-2.600-2.600 1.800-1.800 2.600 2.600 2.200-2z" fill="#000"/>
<rect x="22" y="533" width="1177" height="1" fill="#8a8a8a"/>

<!-- panes -->
<path d="M13 541.500h1865M13 543.500h1865M13 643.500h1865M13 645.500h1865M13 758.500h1865M13 760.500h1865M13 846.500h1866" stroke="#000" fill="none"/>
<rect x="13" y="593" width="1865" height="1" fill="#000"/>
<path d="M14 554.500h1864M14 632.500h1864" stroke="#0ff" fill="none"/>
<path d="M14 554.500h1864M14 632.500h1864" stroke="#000" stroke-dasharray="3 2" fill="none"/>
<rect x="14" y="640" width="1577" height="2.500" fill="#f0f"/>
<text class="lb" x="18" y="559.500" textLength="174" lengthAdjust="spacingAndGlyphs">Overbought_Oversold_All 92.70</text>

<!-- volumes -->
<g transform="translate(.5,0)" fill="none" stroke-width="3" shape-rendering="crispEdges">
<path stroke="#fff0f5" d="M34 758v-2M38 758v-1M46 758v-1M54 758v-1M62 758v-1M70 758v-1M78 758v-19M82 758v-8M98 758v-11M102 758v-15M134 758v-6M142 758v-8M154 758v-1M166 758v-2M186 758v-8M190 758v-7M202 758v-7M218 758v-5M230 758v-7M234 758v-7M238 758v-11M250 758v-3M254 758v-3M266 758v-4M274 758v-8M290 758v-9M314 758v-12M330 758v-7M334 758v-11M350 758v-2M354 758v-15M370 758v-3M386 758v-6M390 758v-4M394 758v-4M398 758v-4M410 758v-2M426 758v-21M430 758v-24M438 758v-14M442 758v-11M454 758v-27M462 758v-9M470 758v-8M486 758v-11M494 758v-31M498 758v-8M506 758v-2M526 758v-5M534 758v-9M542 758v-46M570 758v-52M594 758v-37M606 758v-30M610 758v-22M614 758v-22M626 758v-23M630 758v-59M658 758v-57M690 758v-12M698 758v-7M726 758v-43M742 758v-13M750 758v-12M754 758v-18M762 758v-24M774 758v-20M794 758v-11M798 758v-10M810 758v-6M822 758v-7M854 758v-17M858 758v-7M874 758v-18M882 758v-10M886 758v-9M890 758v-14M918 758v-13M934 758v-19M946 758v-21M950 758v-31M982 758v-13M986 758v-13M1010 758v-19M1014 758v-11M1030 758v-10M1042 758v-25M1082 758v-15M1098 758v-14M1102 758v-14M1106 758v-19M1114 758v-19M1118 758v-22M1138 758v-11M1146 758v-11M1158 758v-12M1162 758v-30M1178 758v-6M1190 758v-15M1198 758v-7M1206 758v-9M1222 758v-9M1230 758v-13M1234 758v-4M1238 758v-14M1266 758v-11M1274 758v-4M1278 758v-46M1282 758v-60M1294 758v-14M1330 758v-38M1338 758v-27M1350 758v-17M1382 758v-14M1402 758v-23M1422 758v-22M1470 758v-30M1494 758v-24M1502 758v-19M1510 758v-33M1534 758v-70M1542 758v-22M1582 758v-21"/>
<path stroke="#ff69b4" d="M14 758v-2M26 758v-1M30 758v-1M86 758v-3M106 758v-9M110 758v-7M118 758v-4M130 758v-5M138 758v-2M150 758v-1M162 758v-2M170 758v-1M198 758v-3M210 758v-3M214 758v-3M226 758v-3M242 758v-6M246 758v-3M262 758v-2M270 758v-2M278 758v-1M286 758v-2M298 758v-4M306 758v-2M318 758v-10M322 758v-3M342 758v-6M346 758v-3M374 758v-2M382 758v-1M406 758v-1M422 758v-1M434 758v-6M446 758v-6M466 758v-6M482 758v-6M502 758v-6M518 758v-5M522 758v-6M538 758v-6M566 758v-44M578 758v-39M582 758v-21M586 758v-19M598 758v-23M602 758v-20M618 758v-9M634 758v-22M638 758v-21M642 758v-12M654 758v-13M666 758v-16M682 758v-21M710 758v-19M718 758v-12M734 758v-11M746 758v-10M758 758v-4M778 758v-14M782 758v-5M786 758v-4M790 758v-3M802 758v-3M818 758v-5M842 758v-18M846 758v-11M850 758v-6M878 758v-3M898 758v-10M906 758v-9M910 758v-6M922 758v-9M926 758v-7M938 758v-12M954 758v-18M958 758v-14M978 758v-8M990 758v-10M1002 758v-9M1006 758v-8M1018 758v-7M1026 758v-4M1038 758v-6M1054 758v-36M1062 758v-24M1066 758v-17M1070 758v-7M1078 758v-6M1090 758v-8M1110 758v-3M1122 758v-18M1126 758v-14M1130 758v-4M1142 758v-6M1154 758v-6M1170 758v-5M1194 758v-7M1202 758v-5M1214 758v-6M1226 758v-4M1254 758v-5M1262 758v-5M1270 758v-4M1286 758v-16M1290 758v-8M1302 758v-8M1314 758v-10M1322 758v-9M1326 758v-6M1342 758v-18M1346 758v-11M1354 758v-4M1374 758v-5M1406 758v-6M1410 758v-3M1430 758v-17M1446 758v-17M1466 758v-23M1474 758v-12M1486 758v-15M1498 758v-14M1538 758v-11M1546 758v-7M1566 758v-12M1574 758v-7M1590 758v-16"/>
<path stroke="#32cd32" d="M18 758v-3M22 758v-3M42 758v-2M50 758v-2M58 758v-1M66 758v-2M74 758v-5M90 758v-5M94 758v-16M114 758v-13M122 758v-8M126 758v-15M146 758v-3M158 758v-5M174 758v-1M178 758v-1M182 758v-2M194 758v-7M206 758v-7M222 758v-6M258 758v-10M282 758v-6M294 758v-15M302 758v-5M310 758v-17M326 758v-14M338 758v-8M358 758v-12M362 758v-3M366 758v-6M378 758v-5M402 758v-23M414 758v-2M418 758v-2M450 758v-7M458 758v-11M474 758v-25M478 758v-15M490 758v-8M510 758v-12M514 758v-9M530 758v-11M546 758v-17M550 758v-42M554 758v-30M558 758v-66M562 758v-55M574 758v-75M590 758v-24M622 758v-11M646 758v-65M650 758v-14M662 758v-33M670 758v-33M674 758v-23M678 758v-47M686 758v-10M694 758v-17M702 758v-21M706 758v-37M714 758v-56M722 758v-15M730 758v-29M738 758v-20M766 758v-7M770 758v-38M806 758v-8M814 758v-7M826 758v-9M830 758v-11M834 758v-28M838 758v-28M862 758v-10M866 758v-17M870 758v-14M894 758v-43M902 758v-10M914 758v-16M930 758v-65M942 758v-22M962 758v-15M966 758v-16M970 758v-34M974 758v-30M994 758v-23M998 758v-19M1022 758v-8M1034 758v-11M1046 758v-46M1050 758v-76M1058 758v-52M1074 758v-68M1086 758v-13M1094 758v-11M1134 758v-15M1150 758v-7M1166 758v-15M1174 758v-9M1182 758v-15M1186 758v-10M1210 758v-25M1218 758v-7M1242 758v-10M1246 758v-8M1250 758v-8M1258 758v-8M1298 758v-8M1306 758v-14M1310 758v-46M1318 758v-20M1334 758v-20M1358 758v-4M1362 758v-8M1366 758v-5M1370 758v-6M1378 758v-5M1386 758v-10M1390 758v-24M1394 758v-13M1414 758v-10M1418 758v-13M1426 758v-24M1434 758v-28M1438 758v-19M1442 758v-25M1450 758v-35M1454 758v-56M1458 758v-45M1462 758v-58M1478 758v-22M1482 758v-35M1490 758v-30M1506 758v-14M1514 758v-16M1518 758v-29M1522 758v-31M1526 758v-43M1530 758v-106M1550 758v-11M1554 758v-16M1558 758v-48M1562 758v-28M1570 758v-19M1578 758v-50M1586 758v-44"/>
</g>
<text x="1590" y="738" font-size="13" fill="#f00">119</text>
<rect x="15.500" y="646.500" width="341" height="22" fill="#b0c4de" stroke="#8f99ab"/>
<use href="#ok" x="19" y="650" width="14" height="14"/>
<text x="38" y="661.500" font-size="11.500" fill="#222" textLength="313" lengthAdjust="spacingAndGlyphs">#Volumes Colored [ Source: #CL Crude Oil ] &#160;[ PINK BARS: 2 ]</text>

<!-- RSI -->
<path d="M14 788.500h1864M14 803.500h1864M14 819.500h1864" stroke="#000" fill="none"/>
<path fill="none" stroke="#000" stroke-width="1" stroke-linejoin="round" d="M14 802.700L45 802.700L54 800.700L80 801L89 799L112 798L129 796L147 800.700L179 803L205 808L232 811L259 810L286 809L312 814L353 815L371 812.700L402 810L420 809L433 815L451 817L473 812L496 815L513 812L545 815L560 807L571 809L574 803L589 800L603 806L620 807L632 812L658 813L679 807L700 805L713 801.700L736 799L758 802.700L769 800L794 801.700L820 802.700L838 797L861 798.700L887 798.300L896 800L930 797L954 804L977 801.700L995 801.700L1039 802.700L1050 797L1079 797L1088 799L1102 799L1120 804L1151 804L1191 804.700L1222 803L1267 805L1289 809L1325 808L1343 810L1388 810L1400 806L1417 805.700L1433 801.700L1457 796.700L1483 795.300L1510 798.700L1530 794.300L1543 797.300L1563 794.300L1577 795L1590 793.300"/>
<text class="lb" x="18" y="776.500" textLength="92" lengthAdjust="spacingAndGlyphs">RSI(60) 62.1990</text>

<!-- time axis -->
<path d="M14.500 846v4M110.500 846v4M206.500 846v4M302.500 846v4M398.500 846v4M494.500 846v4M590.500 846v4M686.500 846v4M782.500 846v4M878.500 846v4M974.500 846v4M1070.500 846v4M1166.500 846v4M1262.500 846v4M1358.500 846v4M1454.500 846v4M1550.500 846v4" stroke="#000" fill="none"/>
<g class="ax">
<text class="ax" x="13.500" y="862">29 Feb 2024</text><text class="ax" x="109" y="862">29 Feb 08:29</text><text class="ax" x="205" y="862">29 Feb 08:58</text><text class="ax" x="301" y="862">29 Feb 09:22</text><text class="ax" x="397" y="862">29 Feb 09:46</text><text class="ax" x="493" y="862">29 Feb 10:10</text><text class="ax" x="589" y="862">29 Feb 10:34</text><text class="ax" x="685" y="862">29 Feb 10:58</text><text class="ax" x="781" y="862">29 Feb 11:22</text><text class="ax" x="877" y="862">29 Feb 11:46</text><text class="ax" x="973" y="862">29 Feb 12:10</text><text class="ax" x="1069" y="862">29 Feb 12:34</text><text class="ax" x="1165" y="862">29 Feb 12:58</text><text class="ax" x="1261" y="862">29 Feb 13:22</text><text class="ax" x="1357" y="862">29 Feb 13:46</text><text class="ax" x="1453" y="862">29 Feb 14:10</text><text class="ax" x="1549" y="862">29 Feb 14:34</text>
</g>

<!-- right axis -->
<path d="M1878 104h4M1878 157h4M1878 208h4M1878 258h4M1878 311h4M1878 362h4M1878 412h4M1878 464h4M1878 516h4" stroke="#000" fill="none"/>
<g clip-path="url(#rt)">
<text class="ay" x="1884" y="109">78.74</text><text class="ay" x="1884" y="162">78.62</text><text class="ay" x="1884" y="213">78.50</text><text class="ay" x="1884" y="263">78.38</text><text class="ay" x="1884" y="316">78.26</text><text class="ay" x="1884" y="367">78.14</text><text class="ay" x="1884" y="417">78.02</text><text class="ay" x="1884" y="469">77.90</text><text class="ay" x="1884" y="521">77.78</text>
<rect x="1879" y="41" width="24" height="24" fill="#000"/>
<text x="1884" y="52" font-size="13.500" fill="#fff5d8">78.3</text>
<text x="1884" y="63.500" font-size="13.500" fill="#fff5d8">78.2</text>
<rect x="1879" y="547" width="24" height="15" fill="#0ff"/><text x="1884" y="560" font-size="13" fill="#fff">90.</text>
<rect x="1879" y="587" width="16" height="13" fill="#000"/><text x="1881" y="598" font-size="12" fill="#fff">50</text>
<rect x="1879" y="625" width="24" height="17" fill="#0ff"/><text x="1884" y="637" font-size="12.500" fill="#fff">10</text>
<rect x="1879" y="634" width="20" height="8" fill="#f0f"/><text x="1884" y="646" font-size="12.500" fill="#fff">70</text>
<text class="ax" x="1881" y="658.500" style="font-size:13px">813</text>
<text class="ax" x="1881" y="755" style="font-size:13px">0</text>
<text class="ax" x="1881" y="773.500" style="font-size:13px">100</text>
<rect x="1879" y="782" width="16" height="13" fill="#000"/><text x="1881" y="793" font-size="12" fill="#fff">68</text>
<rect x="1879" y="797" width="16" height="13" fill="#000"/><text x="1881" y="808" font-size="12" fill="#fff">50</text>
<rect x="1879" y="813" width="16" height="13" fill="#000"/><text x="1881" y="824" font-size="12" fill="#fff">31</text>
<text class="ax" x="1881" y="843" style="font-size:13px">0</text>
</g>

<!-- tabs -->
<rect x="0" y="865" width="1903" height="45" fill="#f0f0f0"/>
<rect x="9" y="865" width="1894" height="1" fill="#fff"/>
<rect x="9" y="866" width="1894" height="1" fill="#000"/>
<rect x="0" y="866" width="9" height="25" fill="#e6e6e6"/>
<rect x="380" y="866" width="75" height="24" fill="#fff"/>
<path d="M380.500 867v23h75V867" fill="none" stroke="#000"/>
<rect x="455" y="867" width="1" height="24" fill="#888"/>
<path d="M92.500 869v20M168.500 869v20M276.500 869v20" stroke="#666" fill="none"/>
<text class="tab" x="54" y="884">WTI,M5</text><text class="tab" x="129" y="884">WTI,M1</text><text class="tab" x="221" y="884">EURUSD,M1</text><text class="tab" x="328" y="884">GBPCHF,M1</text><text class="tab" x="418" y="884" style="fill:#111">WTI,M1</text>
<path d="M1893 872v10l-5-5z" fill="#aaa"/>
<rect x="0" y="890" width="1903" height="1" fill="#fff"/>

<!-- status -->
<path d="M1033.500 895v15M1182.500 895v15M1313.500 895v15M1402.500 895v15M1491.500 895v15M1576.500 895v15M1663.500 895v15M1747.500 895v15" stroke="#a0a0a0" fill="none"/>
<text class="st" x="11" y="912">For Help, press F1</text>
<text class="st" x="1039" y="912">M1 Ultimate A||||||||</text>
<text class="st" x="1189" y="912">2024.02.29 12:07</text>
<text class="st" x="1320" y="912">O: 78.32</text>
<text class="st" x="1408" y="912">H: 78.33</text>
<text class="st" x="1497" y="912">L: 78.31</text>
<text class="st" x="1582" y="912">C: 78.33</text>
<text class="st" x="1669" y="912">V: 16</text>
<text class="st" x="1789" y="912">51785/23 kb</text>
<path d="M1753.500 898v8M1757.500 898v8M1761.500 898v8M1765.500 898v8M1769.500 898v7M1773.500 898v6M1777.500 898v5M1781.500 898v4" stroke="#6b7a00" stroke-width="2.500" fill="none"/>
<path d="M1757.500 910v-2M1761.500 910v-2M1765.500 910v-3M1769.500 910v-3M1773.500 910v-4M1777.500 910v-5M1781.500 910v-6" stroke="#0f4a6b" stroke-width="2.500" fill="none"/>
</svg>
</body></html>
